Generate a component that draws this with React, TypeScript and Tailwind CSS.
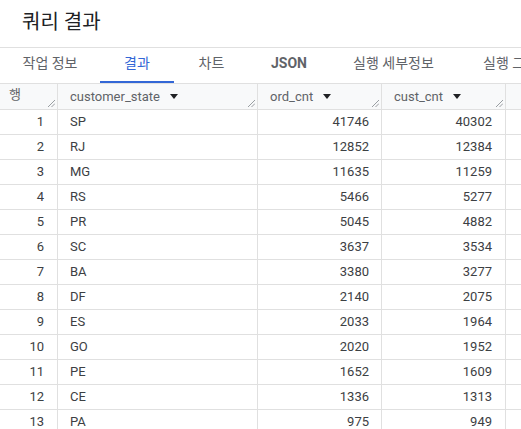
import React from "react";

const rows: [string, number, number][] = [
  ["SP", 41746, 40302],
  ["RJ", 12852, 12384],
  ["MG", 11635, 11259],
  ["RS", 5466, 5277],
  ["PR", 5045, 4882],
  ["SC", 3637, 3534],
  ["BA", 3380, 3277],
  ["DF", 2140, 2075],
  ["ES", 2033, 1964],
  ["GO", 2020, 1952],
  ["PE", 1652, 1609],
  ["CE", 1336, 1313],
  ["PA", 975, 949],
];

const font = { fontFamily: 'Roboto, "Noto Sans CJK KR", sans-serif' };

function Grip() {
  return (
    <svg className="absolute right-[2px] bottom-[2px]" width="8" height="8" viewBox="0 0 8 8">
      <line x1="1" y1="8" x2="8" y2="1" stroke="#80868b" strokeWidth="0.8" />
      <line x1="4.5" y1="8" x2="8" y2="4.5" stroke="#80868b" strokeWidth="0.8" />
    </svg>
  );
}

function Arrow() {
  return (
    <svg width="8" height="5" viewBox="0 0 8 5" className="ml-[10px]">
      <path d="M0 0 L8 0 L4 5 Z" fill="#202124" />
    </svg>
  );
}

const tabs: { t: string; w: string }[] = [
  { t: "작업 정보", w: "w-[100px] justify-center" },
  { t: "결과", w: "w-[74px] justify-center" },
  { t: "차트", w: "w-[75px] justify-center" },
  { t: "JSON", w: "w-[80px] justify-center" },
  { t: "실행 세부정보", w: "w-[129px] justify-center" },
  { t: "실행 그래프", w: "pl-[25px] pr-[24px]" },
];

export default function App() {
  return (
    <div className="w-[521px] h-[429px] overflow-hidden bg-white" style={font}>
      <div className="h-[48px] border-b border-[#e0e0e0] flex items-center pl-[22px]">
        <span className="text-[20px] text-[#202124] leading-none mt-[-4px]">쿼리 결과</span>
      </div>
      <div className="h-[36px] border-b border-[#e0e0e0] flex whitespace-nowrap">
        {tabs.map(({ t, w }, i) => (
          <div
            key={t}
            className={
              "relative flex items-center text-[14px] shrink-0 " +
              w +
              " " +
              (i === 1 ? "text-[#3367d6]" : "text-[#5f6368]") +
              (t === "JSON" ? " font-bold text-[13.5px]" : "")
            }
          >
            <span className="mt-[-4px]">{t}</span>
            {i === 1 && <div className="absolute left-0 right-0 bottom-0 h-[2px] bg-[#3367d6]" />}
          </div>
        ))}
      </div>
      <div className="text-[13px] text-[#3c4043]">
        <div className="flex h-[26px] border-b border-[#e0e0e0] bg-[#f8f9fa] text-[#5f6368]">
          <div className="relative w-[58px] shrink-0 border-r border-[#e0e0e0] pl-[9px] flex items-center">
            <span className="mt-[-4px]">행</span>
            <Grip />
          </div>
          <div className="relative w-[200px] shrink-0 border-r border-[#e0e0e0] pl-[12px] flex items-center">
            <span>customer_state</span>
            <Arrow />
            <Grip />
          </div>
          <div className="relative w-[124px] shrink-0 border-r border-[#e0e0e0] pl-[12px] flex items-center">
            <span>ord_cnt</span>
            <Arrow />
            <Grip />
          </div>
          <div className="relative w-[124px] shrink-0 border-r border-[#e0e0e0] pl-[12px] flex items-center">
            <span>cust_cnt</span>
            <Arrow />
            <Grip />
          </div>
          <div className="flex-1" />
        </div>
        {rows.map(([s, a, b], i) => (
          <div key={s} className="flex h-[25px] border-b border-[#e0e0e0]">
            <div className="w-[58px] shrink-0 border-r border-[#e0e0e0] pr-[13px] flex items-center justify-end text-[#3c4043]">
              {i + 1}
            </div>
            <div className="w-[200px] shrink-0 border-r border-[#e0e0e0] pl-[12px] flex items-center">{s}</div>
            <div className="w-[124px] shrink-0 border-r border-[#e0e0e0] pr-[12px] flex items-center justify-end">{a}</div>
            <div className="w-[124px] shrink-0 border-r border-[#e0e0e0] pr-[13px] flex items-center justify-end">{b}</div>
            <div className="flex-1" />
          </div>
        ))}
      </div>
    </div>
  );
}
